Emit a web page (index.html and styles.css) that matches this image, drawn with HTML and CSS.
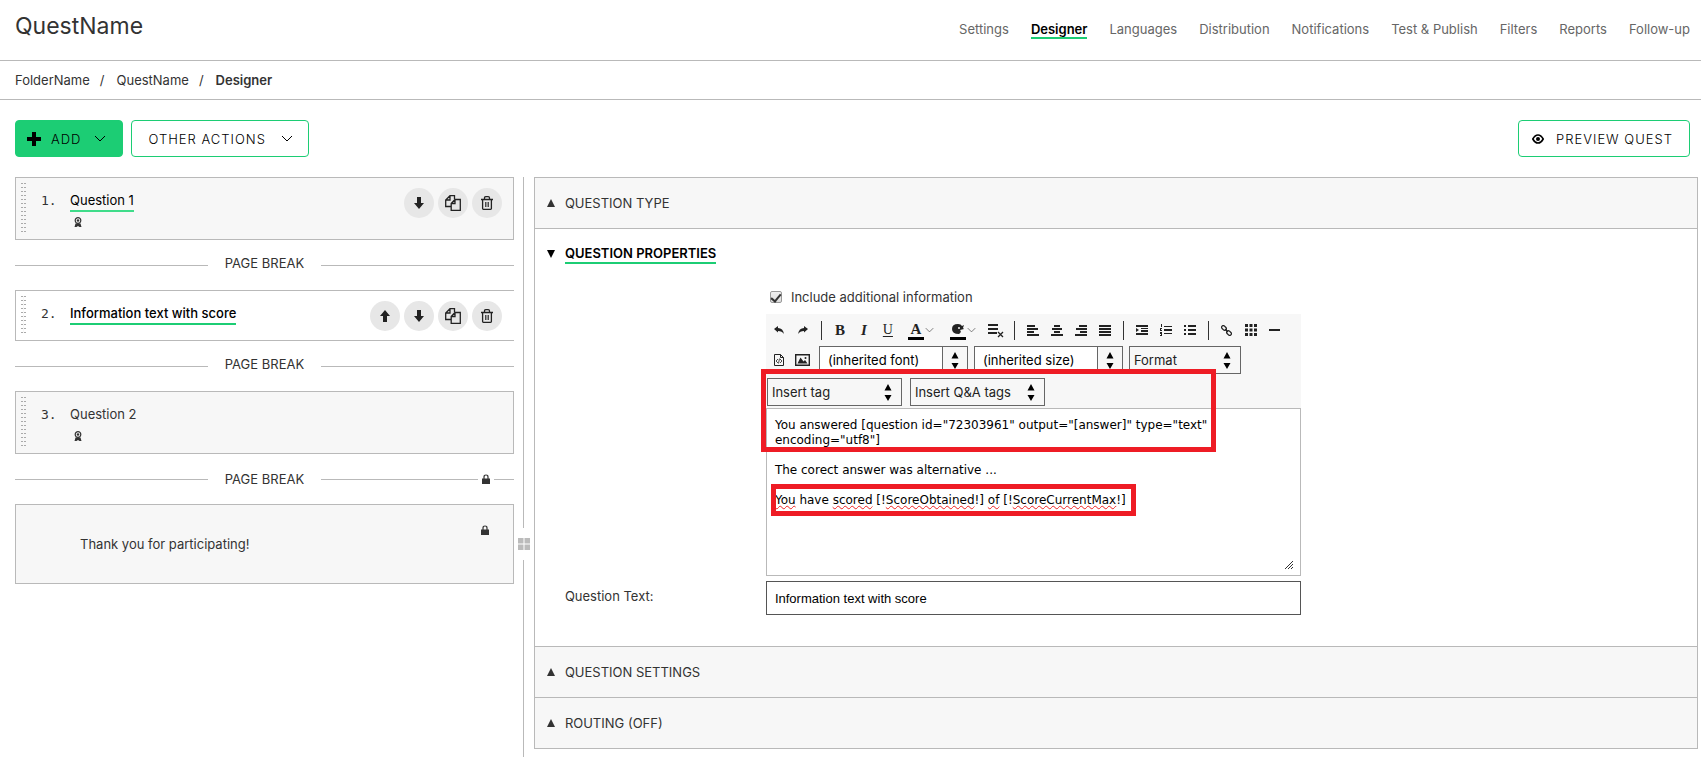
FILE: index.html
```html
<!DOCTYPE html>
<html lang="en">
<head>
<meta charset="UTF-8">
<meta name="viewport" content="width=device-width, initial-scale=1.0">
<title>QuestName - Designer</title>
<link rel="stylesheet" href="styles.css">
</head>
<body>

<!-- Shared icons -->
<svg class="sprite" aria-hidden="true">
  <symbol id="i-chevron" viewBox="0 0 12 7"><path d="M1 1l5 5 5-5" fill="none" stroke="currentColor"/></symbol>
  <symbol id="i-down" viewBox="0 0 12 12"><path d="M4 0h4v6h3L6 12 1 6h3z"/></symbol>
  <symbol id="i-up" viewBox="0 0 12 12"><path d="M4 12h4V6h3L6 0 1 6h3z"/></symbol>
  <symbol id="i-copy" viewBox="0 0 16 16"><path d="M6 11.500H.7V5L5 .7h4.500V4M5 .7V5H.7M6.200 8.500L10 4.500h5.300v10.800H6.200zM10 4.500v4H6.200" fill="none" stroke="currentColor" stroke-width="1.300"/></symbol>
  <symbol id="i-trash" viewBox="0 0 12 14"><path d="M0 3.500h12M3.500 3.500V2q0-1.300 1.300-1.300h2.400q1.300 0 1.300 1.300v1.500M1.600 3.500v9q0 .8.800.8h7.200q.8 0 .8-.8v-9" fill="none" stroke="currentColor" stroke-width="1.300"/><path d="M4.500 6v5M6 6v5M7.500 6v5" stroke="currentColor" stroke-width=".8"/></symbol>
  <symbol id="i-badge" viewBox="0 0 8 11"><circle cx="4" cy="3.500" r="2.800" fill="none" stroke="currentColor" stroke-width="1.200"/><circle cx="4" cy="3.500" r="1.200"/><path d="M1.500 6.500h5L7.500 10H5.500L4 9 2.500 10H.5z"/></symbol>
  <symbol id="i-lock" viewBox="0 0 8 10"><path d="M2 5V3q0-2 2-2t2 2v2" fill="none" stroke="currentColor" stroke-width="1.200"/><path d="M0 4.500h8V10H0z"/></symbol>
  <symbol id="i-updown" viewBox="0 0 8 17"><path d="M4 0l3.500 6.500h-7zM4 17L.5 11h7z"/></symbol>
</svg>

<header class="topbar">
  <h1>QuestName</h1>
  <nav class="menu">
    <a href="#">Settings</a>
    <a href="#" class="active">Designer</a>
    <a href="#">Languages</a>
    <a href="#">Distribution</a>
    <a href="#">Notifications</a>
    <a href="#">Test &amp; Publish</a>
    <a href="#">Filters</a>
    <a href="#">Reports</a>
    <a href="#">Follow-up</a>
  </nav>
</header>

<nav class="breadcrumb">
  <a href="#">FolderName</a><span class="slash">/</span><a href="#">QuestName</a><span class="slash">/</span><b>Designer</b>
</nav>

<div class="actions">
  <button class="btn btn-add"><svg width="14" height="14" viewBox="0 0 14 14"><path d="M5 0h4v5h5v4H9v5H5V9H0V5h5z"/></svg>ADD<svg class="chev" width="12" height="7"><use href="#i-chevron"/></svg></button>
  <button class="btn">OTHER ACTIONS<svg class="chev" width="12" height="7"><use href="#i-chevron"/></svg></button>
  <button class="btn btn-preview"><svg width="12" height="10" viewBox="0 0 12 10"><path d="M.8 5Q3 1 6 1t5.200 4Q9 9 6 9T.8 5z" fill="none" stroke="currentColor" stroke-width="1.600"/><circle cx="6" cy="5" r="2"/></svg>PREVIEW QUEST</button>
</div>

<main class="workspace">

  <!-- Question list -->
  <section class="questions">
    <div class="item">
      <span class="drag"></span>
      <span class="num">1.</span>
      <div class="title"><a href="#" class="underlined soft">Question 1</a><svg class="badge" width="8" height="11"><use href="#i-badge"/></svg></div>
      <div class="tools">
        <button aria-label="Move down"><svg width="12" height="12"><use href="#i-down"/></svg></button>
        <button aria-label="Copy"><svg width="16" height="16"><use href="#i-copy"/></svg></button>
        <button aria-label="Delete"><svg width="12" height="14"><use href="#i-trash"/></svg></button>
      </div>
    </div>

    <div class="page-break"><span>PAGE BREAK</span></div>

    <div class="item selected">
      <span class="drag"></span>
      <span class="num">2.</span>
      <div class="title"><a href="#" class="underlined">Information text with score</a></div>
      <div class="tools">
        <button aria-label="Move up"><svg width="12" height="12"><use href="#i-up"/></svg></button>
        <button aria-label="Move down"><svg width="12" height="12"><use href="#i-down"/></svg></button>
        <button aria-label="Copy"><svg width="16" height="16"><use href="#i-copy"/></svg></button>
        <button aria-label="Delete"><svg width="12" height="14"><use href="#i-trash"/></svg></button>
      </div>
    </div>

    <div class="page-break"><span>PAGE BREAK</span></div>

    <div class="item">
      <span class="drag"></span>
      <span class="num">3.</span>
      <div class="title"><a href="#">Question 2</a><svg class="badge" width="8" height="11"><use href="#i-badge"/></svg></div>
    </div>

    <div class="page-break locked">PAGE BREAK<span class="pb-lock"><svg width="8" height="10"><use href="#i-lock"/></svg></span></div>

    <div class="item thanks">
      <p>Thank you for participating!</p>
      <svg width="8" height="10"><use href="#i-lock"/></svg>
    </div>
  </section>

  <div class="splitter">
    <span class="line line-top"></span>
    <svg width="12" height="12" viewBox="0 0 12 12"><path d="M0 0h5.500v5.500H0zM6.500 0H12v5.500H6.500zM0 6.500h5.500V12H0zM6.500 6.500H12V12H6.500z"/></svg>
    <span class="line line-bottom"></span>
  </div>

  <!-- Property panel -->
  <section class="panel">
    <h2 class="fold"><svg width="8" height="8" viewBox="0 0 8 8"><path d="M4 0l4 8H0z"/></svg><span>QUESTION TYPE</span></h2>

    <div class="open">
      <h2 class="fold"><svg width="8" height="8" viewBox="0 0 8 8"><path d="M4 8L0 0h8z"/></svg><span class="underlined">QUESTION PROPERTIES</span></h2>

      <div class="form">
        <label class="check"><input type="checkbox" checked>Include additional information</label>

        <div class="editor">
          <div class="toolbar">
            <div class="row">
              <button aria-label="Undo"><svg width="10" height="8" viewBox="0 0 10 8"><path d="M0 3l4-3v2q5 0 6 6-2-3-6-3v1.500z"/></svg></button>
              <button aria-label="Redo"><svg width="10" height="8" viewBox="0 0 10 8"><path d="M10 3L6 0v2Q1 2 0 8q2-3 6-3v1.500z"/></svg></button>
              <span class="sep"></span>
              <button class="glyph"><b>B</b></button>
              <button class="glyph"><b><i>I</i></b></button>
              <button class="glyph"><u>U</u></button>
              <button class="glyph split"><span class="color">A</span><svg width="9" height="6" viewBox="0 0 12 7"><path d="M1 1l5 5 5-5" fill="none" stroke="#555"/></svg></button>
              <button class="glyph split" aria-label="Background color"><span class="color"><svg width="12" height="10" viewBox="0 0 12 10"><path d="M6 0Q9 0 10 2l2-1-1 3 1 1-4 1q2 2-1 4Q0 10 0 5t6-5z"/><circle cx="7" cy="4" r="1" fill="#f7f7f7"/></svg></span><svg width="9" height="6" viewBox="0 0 12 7"><path d="M1 1l5 5 5-5" fill="none" stroke="#555"/></svg></button>
              <button aria-label="Clean formatting"><svg width="16" height="16" viewBox="0 0 16 16"><path d="M0 2h10v2H0zM0 6h10v2H0zM0 10h9v2H0z"/><path d="M10 10l5 5M15 10l-5 5" stroke="currentColor" stroke-width="1.300"/></svg></button>
              <span class="sep"></span>
              <button aria-label="Align left"><svg width="12" height="11" viewBox="0 0 12 11"><path d="M0 0h8v2H0zM0 3h11v2H0zM0 6h7v2H0zM0 9h12v2H0z"/></svg></button>
              <button aria-label="Align center"><svg width="12" height="11" viewBox="0 0 12 11"><path d="M3 0h6v2H3zM1 3h10v2H1zM3 6h6v2H3zM0 9h12v2H0z"/></svg></button>
              <button aria-label="Align right"><svg width="12" height="11" viewBox="0 0 12 11"><path d="M4 0h8v2H4zM1 3h11v2H1zM5 6h7v2H5zM0 9h12v2H0z"/></svg></button>
              <button aria-label="Justify"><svg width="12" height="11" viewBox="0 0 12 11"><path d="M0 0h12v2H0zM0 3h12v2H0zM0 6h12v2H0zM0 9h12v2H0z"/></svg></button>
              <span class="sep"></span>
              <button aria-label="Indent"><svg width="12" height="10" viewBox="0 0 12 10"><path d="M0 0h12v2H0zM5 3h7v1H5zM5 5h7v2H5zM0 8h12v2H0zM0 3l3 2-3 2z"/></svg></button>
              <button aria-label="Numbered list"><svg width="12" height="12" viewBox="0 0 12 12"><path d="M4 2h8v1H4zM4 5h8v2H4zM4 9h8v1H4zM1 0h1v3H1zM0 4h2v1H1v1h1v1H0zM0 8h2v4H0v-1h1v-1H0z"/></svg></button>
              <button aria-label="Bulleted list"><svg width="12" height="10" viewBox="0 0 12 10"><path d="M0 0h2v2H0zM4 0h8v2H4zM0 4h2v2H0zM4 4h8v2H4zM0 8h2v2H0zM4 8h8v2H4z"/></svg></button>
              <span class="sep"></span>
              <button aria-label="Insert link"><svg width="11" height="11" viewBox="0 0 11 11"><g fill="none" stroke="currentColor" stroke-width="1.300"><rect x="-2.700" y="-1.700" width="5.400" height="3.400" rx="1.700" transform="translate(3 3) rotate(45)"/><rect x="-2.700" y="-1.700" width="5.400" height="3.400" rx="1.700" transform="translate(8 8) rotate(45)"/><path d="M4 4l3 3"/></g></svg></button>
              <button aria-label="Insert table"><svg width="12" height="12" viewBox="0 0 12 12"><path d="M0 0h3v3H0zM4.500 0h3v3h-3zM9 0h3v3H9zM0 4.500h3v3H0zM4.500 4.500h3v3h-3zM9 4.500h3v3H9zM0 9h3v3H0zM4.500 9h3v3h-3zM9 9h3v3H9z"/></svg></button>
              <button aria-label="Horizontal line"><svg width="11" height="2" viewBox="0 0 11 2"><path d="M0 0h11v2H0z"/></svg></button>
            </div>
            <div class="row selects">
              <button aria-label="View HTML"><svg width="10" height="12" viewBox="0 0 10 12"><path d="M.5.5h6l3 3v8h-9zM6.500.5v3h3" fill="none" stroke="currentColor"/><path d="M4 5L2 7l2 2M6 5l2 2-2 2M5.500 4.500l-1 5" fill="none" stroke="currentColor" stroke-width=".8"/></svg></button>
              <button aria-label="Insert image"><svg width="15" height="12" viewBox="0 0 15 12"><path d="M.7.700h13.600v10.600H.7z" fill="none" stroke="currentColor" stroke-width="1.400"/><path d="M2.500 9.500l3-6 3 4 1.500-1.500 2.500 3.500z"/><circle cx="10.500" cy="4" r="1"/></svg></button>
              <span class="dropdown combo combo-font"><select aria-label="Font"><option>(inherited font)</option></select><span class="arrows"><svg width="8" height="17"><use href="#i-updown"/></svg></span></span>
              <span class="dropdown combo combo-size"><select aria-label="Font size"><option>(inherited size)</option></select><span class="arrows"><svg width="8" height="17"><use href="#i-updown"/></svg></span></span>
              <span class="dropdown format"><select aria-label="Format"><option>Format</option></select><span class="arrows"><svg width="8" height="17"><use href="#i-updown"/></svg></span></span>
            </div>
            <div class="row selects tags">
              <span class="dropdown"><select aria-label="Insert tag"><option>Insert tag</option></select><span class="arrows"><svg width="8" height="17"><use href="#i-updown"/></svg></span></span>
              <span class="dropdown"><select aria-label="Insert Q&amp;A tags"><option>Insert Q&amp;A tags</option></select><span class="arrows"><svg width="8" height="17"><use href="#i-updown"/></svg></span></span>
            </div>
          </div>
          <div class="content" contenteditable="true" spellcheck="false" role="textbox" aria-label="Additional information">
            <p>You answered [question id="72303961" output="[answer]" type="text"<br>encoding="utf8"]</p>
            <p>The corect answer was alternative ...</p>
            <p><span class="typo">You</span> have <span class="typo">scored</span> [!<span class="typo">ScoreObtained</span>!] <span class="typo">of</span> [!<span class="typo">ScoreCurrentMax</span>!]</p>
          </div>
          <svg class="grip" width="9" height="8" viewBox="0 0 9 8"><path d="M0 8l8-8M3 8l5-5M6 8l2-2" stroke="#333" fill="none"/></svg>
          <span class="mark mark-tags"></span>
          <span class="mark mark-score"></span>
        </div>

        <label class="caption" for="question_text">Question Text:</label>
        <input class="text" id="question_text" type="text" value="Information text with score">
      </div>
    </div>

    <h2 class="fold"><svg width="8" height="8" viewBox="0 0 8 8"><path d="M4 0l4 8H0z"/></svg><span>QUESTION SETTINGS</span></h2>
    <h2 class="fold"><svg width="8" height="8" viewBox="0 0 8 8"><path d="M4 0l4 8H0z"/></svg><span>ROUTING (OFF)</span></h2>
  </section>
</main>

</body>
</html>
```
FILE: styles.css
```css
:root { --green:#1ccd74; --line:#b9b9b9; --grey:#f7f7f7; --text:#333; --red:#ee1c25; }
*{box-sizing:border-box;}
body{margin:0;min-height:100vh;display:flex;flex-direction:column;background:#fff;color:var(--text);font-family:Inter,"Liberation Sans",sans-serif;font-size:13px;line-height:16px;}
a{color:inherit;text-decoration:none;}
h1,h2,p{margin:0;font-weight:400;}
button,select,input{font:inherit;color:inherit;}
button{cursor:pointer;}
svg{display:block;fill:currentColor;flex:none;}
.sprite{display:none;}
.underlined{border-bottom:2px solid var(--green);color:#000;font-weight:500;}
.underlined.soft{border-color:#3fdc8a;font-weight:400;}

/* Header */
.topbar{display:flex;justify-content:space-between;height:61px;padding:0 11px 0 15px;border-bottom:1px solid var(--line);}
h1{font-size:23px;line-height:52px;}
.menu{display:flex;gap:22px;padding-top:21px;color:#666;}
.menu a{height:18px;}
.menu .active{color:#000;font-weight:600;border-bottom:2px solid var(--green);}
.breadcrumb{height:39px;padding:0 15px;line-height:39px;border-bottom:1px solid var(--line);}
.breadcrumb b{font-weight:600;}
.slash{margin:0 12px 0 10px;}

.actions{display:flex;gap:8px;padding:20px 11px 20px 15px;}
.btn{display:flex;align-items:center;height:37px;padding:0 15px 0 16px;background:#fff;border:1px solid var(--green);border-radius:4px;color:#000;font-weight:300;letter-spacing:1px;}
.btn .chev{margin-left:15px;}
.btn-add{padding:0 16px 0 11px;gap:10px;background:var(--green);}
.btn-add .chev{margin-left:3px;}
.btn-preview{margin-left:auto;padding:0 16px 0 13px;gap:12px;}

.workspace{flex:1;display:grid;grid-template-columns:3fr 20px 7fr;padding:0 3px 0 15px;}

/* Question list */
.item{display:flex;min-height:63px;padding:5px 11px 7px 5px;background:var(--grey);border:1px solid var(--line);}
.item.selected{min-height:51px;background:#fff;border-right:0;padding-right:12px;}
.drag{width:5px;background:linear-gradient(var(--grey),var(--grey)) 2px 0/1px 100% no-repeat,repeating-linear-gradient(#aaa 0 1px,transparent 1px 4px);}
.num{width:44px;padding:10px 0 0 15px;font-family:"DejaVu Sans Mono",monospace;}
.title{flex:1;padding-top:9px;}
.title a{display:inline-block;height:20px;}
.badge{margin:5px 0 0 4px;}
.tools{display:flex;gap:4px;padding-top:5px;}
.tools button{display:grid;place-items:center;width:30px;height:30px;padding:0;border:0;border-radius:50%;background:#e7e7e7;color:#222;}
.page-break{display:flex;align-items:center;height:50px;gap:17px;line-height:14px;}
.page-break > span:not(.pb-lock){padding-bottom:4px;}
.page-break::before,.page-break::after{content:"";flex:1;height:1px;background:var(--line);}
.page-break.locked::after{display:none;}
.pb-lock{display:flex;align-items:center;flex:1;gap:4px;}
.pb-lock::before{content:"";flex:1;height:1px;background:var(--line);}
.pb-lock::after{content:"";width:20px;height:1px;background:var(--line);}
.thanks{min-height:80px;justify-content:space-between;padding:20px 24px 0 64px;}
.thanks p{padding-top:11px;}

.splitter{display:flex;flex-direction:column;align-items:center;gap:10px;color:#bbb;}
.line{width:1px;background:var(--line);}
.line-top{flex:16;}
.line-bottom{flex:9;}

/* Property panel */
.panel{align-self:start;border:1px solid var(--line);margin-bottom:8px;background:var(--grey);}
.fold{display:flex;align-items:center;gap:10px;height:50px;padding-left:12px;font-size:13px;line-height:17px;}
.fold + .fold{border-top:1px solid var(--line);height:51px;}
.open{background:#fff;border:1px solid var(--line);border-width:1px 0;padding-bottom:31px;}
.open .fold{color:#000;}
.open .underlined{font-weight:600;}
.form{display:grid;grid-template-columns:201px minmax(0,535px);padding:10px 30px 0;}
.check{grid-column:2;display:flex;align-items:center;gap:9px;height:16px;margin-bottom:9px;}
.check input{appearance:none;width:12px;height:12px;margin:0 0 0 4px;border:1px solid #999;border-radius:2px;background:linear-gradient(#eee,#ddd);display:grid;place-items:center;}
.check input:checked::before{content:"";width:4px;height:8px;border:solid #333;border-width:0 2px 2px 0;transform:rotate(40deg);}
.editor{grid-column:2;position:relative;margin-bottom:5px;}
.toolbar{background:var(--grey);padding-left:1px;color:#222;}
.row{display:flex;align-items:center;height:32px;}
.row.selects{align-items:flex-start;}
.toolbar button{display:grid;place-items:center;width:24px;height:28px;padding:0;border:0;background:none;}
.toolbar .glyph{font-family:"Liberation Serif",serif;font-size:15px;}
.toolbar .glyph u{font-size:14px;text-decoration-thickness:1px;text-underline-offset:2px;}
.toolbar .split{display:flex;align-items:center;width:42px;padding-left:8px;gap:1px;}
.color{display:grid;place-items:center;width:16px;height:20px;border-bottom:3px solid #000;font-weight:700;}
.sep{width:1px;height:19px;margin:0 6px;background:#333;}
.dropdown{display:inline-grid;grid-template-columns:1fr 25px;width:135px;height:28px;border:1px solid #666;background:var(--grey);}
.dropdown select{appearance:none;grid-area:1/1/2/3;min-width:0;padding:0 0 0 4px;border:0;background:none;border-radius:0;}
.dropdown .arrows{grid-area:1/2;display:grid;place-items:center;color:#000;pointer-events:none;}
.combo{width:149px;margin:0 6px 0 4px;background:#fff;}
.combo select{padding-left:8px;color:#000;}
.combo .arrows{border-left:1px solid #666;background:var(--grey);}
.combo-size{margin:0 6px 0 0;}
.format{width:112px;}
.tags{gap:8px;height:30px;}
.content{height:168px;padding:9px 8px;border:1px solid var(--line);background:#fff;color:#000;font:12px/15px "DejaVu Sans",Verdana,sans-serif;outline:0;}
.content p{margin-bottom:15px;}
.typo{text-decoration:underline wavy #e22 1px;text-underline-offset:1px;}
.grip{position:absolute;right:7px;bottom:7px;}
.mark{position:absolute;border:5px solid var(--red);pointer-events:none;}
.mark-tags{left:-5px;top:55px;width:455px;height:83px;}
.mark-score{left:5px;top:170px;width:365px;height:32px;}
.caption{padding-top:7px;}
.text{height:34px;padding:0 8px;border:1px solid #555;background:#fff;color:#000;font:13px "Liberation Sans",Arial,sans-serif;}
```
